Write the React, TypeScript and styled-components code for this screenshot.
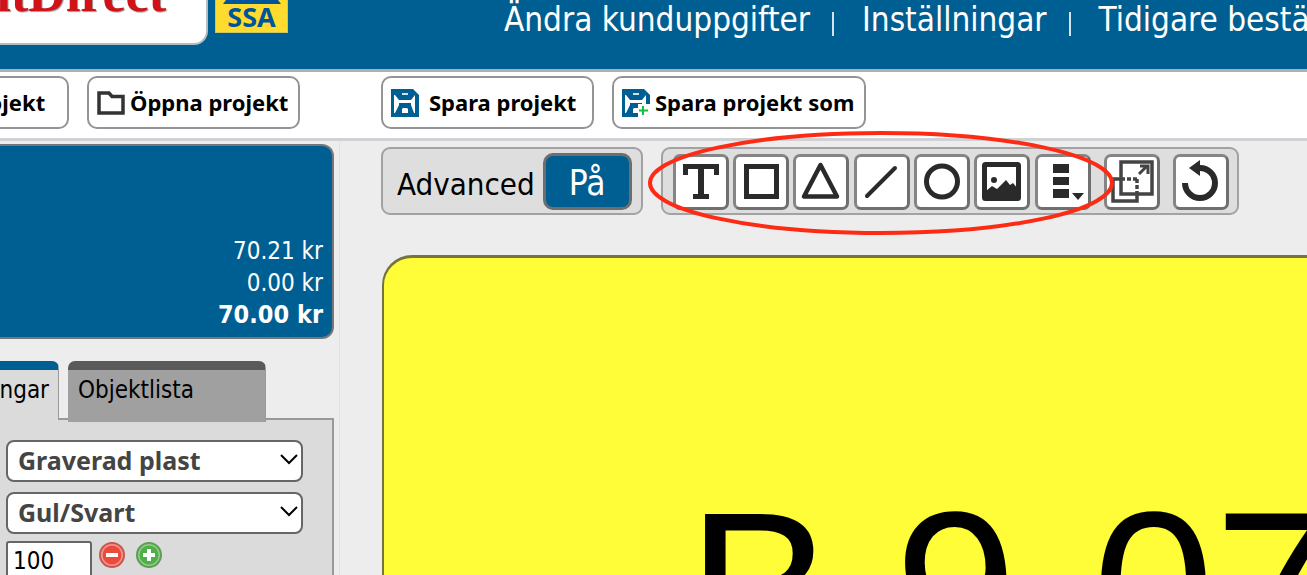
import React from "react";
import styled, { createGlobalStyle } from "styled-components";

const blue = "#005f92";
const ink = "#2a2a2a";
const regular = `"DejaVu Sans Condensed", "Noto Sans", sans-serif`;
const heavy = `"Noto Sans", sans-serif`;

const GlobalStyle = createGlobalStyle`
  *, *::before, *::after { box-sizing: border-box; }
  html, body { margin: 0; height: 100%; overflow: hidden; background: #ededed; }
  body { font-family: ${regular}; color: #000; }
  #root { height: 100%; }
  button, input, select { font: inherit; color: inherit; margin: 0; }
  button { cursor: pointer; }
`;

const Page = styled.div`
  display: flex;
  flex-direction: column;
  height: 100%;
  overflow: hidden;
`;

const Header = styled.header`
  display: flex;
  align-items: flex-start;
  flex: none;
  height: 72px;
  background: ${blue};
  border-bottom: 3px solid #adafb1;
  overflow: hidden;
`;

const LogoCard = styled.div`
  display: flex;
  justify-content: flex-end;
  align-items: flex-end;
  flex: none;
  width: 208px;
  height: 45px;
  padding: 0 40px 31px 0;
  background: #fff;
  border: solid #b5bcc2;
  border-width: 0 2px 2px 0;
  border-bottom-right-radius: 14px;
  overflow: hidden;
`;

const LogoText = styled.span`
  font: bold 52px/36px "Liberation Serif", serif;
  color: #cf1318;
  text-shadow: 1px 1px 1px #999;
`;

const Badge = styled.div`
  display: flex;
  flex-direction: column;
  align-items: center;
  flex: none;
  width: 73px;
  height: 33px;
  margin-left: 7px;
  background: #fddb2f;
  border: solid #c9c66a;
  border-width: 0 1px 1px;
  color: #00549a;
  font: bold 27px/26px ${heavy};
`;

const BadgeRoof = styled.svg`
  display: block;
  flex: none;
  width: 58px;
  height: 4px;
`;

const Nav = styled.nav`
  display: flex;
  flex: 1;
  min-width: 0;
  padding-left: 216px;
  color: #fff;
  font-size: 33px;
  line-height: 40px;
  white-space: nowrap;
  overflow: hidden;
`;

const NavLink = styled.a`
  color: inherit;
  text-decoration: none;
`;

const Divider = styled.span`
  flex: none;
  width: 2px;
  height: 24px;
  margin: 12px 28px 0 22px;
  background: #d5e3ec;
`;

const ActionBar = styled.div`
  display: grid;
  grid-template-columns: 340px 1fr;
  flex: none;
  padding: 4px 0 9px;
  background: #fff;
  border-bottom: 3px solid #cfd1d5;
`;

const Actions = styled.div<{ $end?: boolean }>`
  display: flex;
  gap: 18px;
  justify-content: ${(p) => (p.$end ? "flex-end" : "flex-start")};
  padding: ${(p) => (p.$end ? "0 40px 0 0" : "0 0 0 41px")};
  overflow: hidden;
`;

const ActionButton = styled.button<{ $width: number; $gap?: number }>`
  display: flex;
  align-items: center;
  gap: ${(p) => p.$gap ?? 5}px;
  flex: none;
  width: ${(p) => p.$width}px;
  height: 53px;
  padding: 0 8px;
  background: #fff;
  border: 2px solid #949494;
  border-radius: 10px;
  font: bold 22px/28px ${heavy};
  white-space: nowrap;
`;

const ActionLabel = styled.span`
  padding-bottom: 2px;
`;

const Main = styled.main`
  display: grid;
  grid-template-columns: 340px 1fr;
  grid-template-rows: 1fr;
  flex: 1;
  min-height: 0;
`;

const Sidebar = styled.aside`
  min-height: 0;
  padding: 3px 5px 0 0;
  border-right: 1px solid #e2e2e2;
  overflow: hidden;
`;

const Prices = styled.dl`
  display: flex;
  flex-direction: column;
  justify-content: flex-end;
  height: 195px;
  margin: 0;
  padding: 0 9px 6px 0;
  background: ${blue};
  border: solid #777;
  border-width: 2px 2px 2px 0;
  border-radius: 0 12px 12px 0;
  color: #fff;
  font-size: 24px;
  line-height: 32px;
`;

const Price = styled.dd<{ $total?: boolean }>`
  margin: 0;
  text-align: right;
  font-size: ${(p) => (p.$total ? 25 : 24)}px;
  font-weight: ${(p) => (p.$total ? "bold" : "normal")};
`;

const Tabs = styled.div`
  display: flex;
  align-items: flex-start;
  gap: 9px;
  margin-top: 22px;
`;

const Tab = styled.button<{ $active?: boolean; $width: number }>`
  position: relative;
  display: flex;
  justify-content: ${(p) => (p.$active ? "flex-end" : "flex-start")};
  align-items: flex-start;
  width: ${(p) => p.$width}px;
  height: ${(p) => (p.$active ? 59 : 61)}px;
  padding: 4px 9px 0 10px;
  background: ${(p) => (p.$active ? "#dbdbdb" : "#a0a0a0")};
  border: 0 solid #999;
  border-top: 9px solid ${(p) => (p.$active ? blue : "#5a5a5a")};
  border-right-width: 1px;
  border-radius: ${(p) => (p.$active ? "0 7px 0 0" : "7px 7px 0 0")};
  font-size: 24px;
  line-height: 32px;
  overflow: hidden;
`;

const Settings = styled.section`
  display: flex;
  flex-direction: column;
  margin-top: -4px;
  padding: 20px 29px 20px 6px;
  background: #dbdbdb;
  border: solid #999;
  border-width: 2px 2px 0 0;
`;

const SelectBox = styled.div`
  display: grid;
  align-items: center;
  margin-bottom: 10px;
`;

const Select = styled.select`
  grid-area: 1 / 1;
  width: 100%;
  height: 42px;
  padding: 0 40px 2px 10px;
  appearance: none;
  background: #fff;
  border: 2px solid #666;
  border-radius: 8px;
  color: #444;
  font: bold 25px/34px ${heavy};
`;

const Chevron = styled.svg`
  grid-area: 1 / 1;
  justify-self: end;
  width: 18px;
  height: 12px;
  margin: 0 5px 4px 0;
  pointer-events: none;
`;

const SizeRow = styled.div`
  display: flex;
  align-items: flex-start;
  gap: 11px;
  margin-top: -3px;
`;

const SizeInput = styled.input`
  width: 86px;
  height: 40px;
  margin-right: -4px;
  padding: 0 5px;
  background: #fff;
  border: 2px solid #666;
  border-radius: 3px;
  font-size: 24px;
`;

const RoundButton = styled.button`
  display: block;
  width: 26px;
  height: 28px;
  padding: 1px 0;
  background: none;
  border: 0;
`;

const Workspace = styled.div`
  display: flex;
  flex-direction: column;
  min-width: 0;
  min-height: 0;
  padding: 6px 0 0 41px;
`;

const Tools = styled.div`
  display: flex;
  gap: 18px;
`;

const Panel = styled.div<{ $pad: string; $gap: number }>`
  position: relative;
  display: flex;
  align-items: center;
  gap: ${(p) => p.$gap}px;
  flex: none;
  height: 68px;
  padding: ${(p) => p.$pad};
  background: #dedede;
  border: 2px solid #a2a2a2;
  border-radius: 9px;
`;

const PanelLabel = styled.label`
  font-size: 31px;
  line-height: 40px;
  padding-top: 6px;
`;

const Toggle = styled.button`
  width: 89px;
  height: 57px;
  padding: 4px 0 0;
  background: ${blue};
  border: 3px solid #6e6e6e;
  border-radius: 10px;
  color: #fff;
  font-size: 35px;
  line-height: 40px;
`;

const ToolSet = styled.div`
  display: flex;
  justify-content: space-between;
  width: 418px;
`;

const ToolButton = styled.button`
  width: 56px;
  height: 56px;
  padding: 0;
  background: #fff;
  border: 3px solid #858585;
  border-right-color: #6f6f6f;
  border-bottom-color: #6f6f6f;
  border-radius: 7px;
`;

const ToolIcon = styled.svg`
  display: block;
  width: 50px;
  height: 50px;
`;

const Highlight = styled.svg`
  position: absolute;
  left: -16px;
  top: -19px;
  width: 468px;
  height: 106px;
  pointer-events: none;
`;

const Sheet = styled.div`
  display: flex;
  gap: 75px;
  flex: 1;
  min-height: 0;
  margin: 40px 0 0 1px;
  padding: 208px 0 0 303px;
  background: #fffd38;
  border: solid #75733f;
  border-width: 3px 0 0 2px;
  border-top-left-radius: 30px;
  font: 220px/248px "Liberation Sans", sans-serif;
  white-space: nowrap;
  overflow: hidden;
`;

const Floppy = ({ plus }: { plus?: boolean }) => (
  <svg width="28" height="28" viewBox="0 0 28 28" aria-hidden="true">
    <path d="M0 0H22L28 6V28H0Z" fill={blue} />
    <path d="M4 6L8 11V16L4 24H3V6ZM24 6V24H23L20 16V11Z" fill="#fff" />
    <path d="M7 11H21V14H7Z" fill="#fff" />
    <path d="M11 4H17V6H11Z" fill="#cfe0ea" />
    <path d="M11 24V20L12 19H16L17 20V24Z" fill="#fff" />
    {plus && (
      <>
        <path d="M16 15H28V28H16Z" fill="#fff" />
        <path d="M21 17V26M17 21.5H26" stroke="#10c040" strokeWidth="2" />
      </>
    )}
  </svg>
);

const Folder = () => (
  <svg width="28" height="24" viewBox="0 0 28 24" aria-hidden="true">
    <path d="M2 2H12L15 5.5H26V22H2Z" fill="none" stroke="#333" strokeWidth="3.5" />
  </svg>
);

const shapes: { name: string; art: React.ReactNode }[] = [
  {
    name: "Text",
    art: <path d="M7 7H43V18H38V12H28V37H33V42H17V37H22V12H12V18H7Z" fill={ink} />,
  },
  {
    name: "Rektangel",
    art: <rect x="10.5" y="9.5" width="30" height="30" fill="none" stroke={ink} strokeWidth="5" />,
  },
  {
    name: "Triangel",
    art: <path d="M24.5 8L8 39.5H41Z" fill="none" stroke={ink} strokeWidth="4.5" strokeLinejoin="round" />,
  },
  {
    name: "Linje",
    art: <path d="M10 39L38 11" stroke={ink} strokeWidth="4" strokeLinecap="round" />,
  },
  {
    name: "Cirkel",
    art: <circle cx="25" cy="24.5" r="15.5" fill="none" stroke={ink} strokeWidth="5" />,
  },
  {
    name: "Bild",
    art: (
      <>
        <rect x="7.5" y="7.5" width="34" height="34" rx="1" fill="none" stroke={ink} strokeWidth="5" />
        <circle cx="17" cy="23" r="3" fill={ink} />
        <path d="M9 40V34L15 29L20 32L29 23L33 28L36 26L41 32V40Z" fill={ink} />
      </>
    ),
  },
  {
    name: "Lista",
    art: (
      <>
        <path d="M15 7H31V16H15ZM15 20H31V28H15ZM15 32H31V41H15Z" fill={ink} />
        <path d="M34 36H46L40 43Z" fill={ink} />
      </>
    ),
  },
];

const RoundIcon = ({ edge, fill, light, d }: { edge: string; fill: string; light: string; d: string }) => (
  <svg width="26" height="26" viewBox="0 0 26 26" aria-hidden="true">
    <circle cx="13" cy="13" r="12" fill={light} stroke={edge} strokeWidth="2" />
    <circle cx="13" cy="13" r="9.5" fill={fill} />
    <path d={d} stroke="#fff" strokeWidth="4" />
  </svg>
);

export default function App() {
  return (
    <>
      <GlobalStyle />
      <Page>
        <Header>
          <LogoCard>
            <LogoText>SkyltDirect</LogoText>
          </LogoCard>
          <Badge>
            <BadgeRoof viewBox="0 0 58 4" aria-hidden="true">
              <path d="M3 0H55L58 4H0Z" fill="#00549a" />
            </BadgeRoof>
            SSA
          </Badge>
          <Nav>
            <NavLink href="#kund">Ändra kunduppgifter</NavLink>
            <Divider />
            <NavLink href="#installningar">Inställningar</NavLink>
            <Divider />
            <NavLink href="#bestallningar">Tidigare beställningar</NavLink>
          </Nav>
        </Header>

        <ActionBar>
          <Actions $end>
            <ActionButton $width={213} $gap={16}>
              <Folder />
              <ActionLabel>Nytt projekt</ActionLabel>
            </ActionButton>
            <ActionButton $width={213}>
              <Folder />
              <ActionLabel>Öppna projekt</ActionLabel>
            </ActionButton>
          </Actions>
          <Actions>
            <ActionButton $width={213} $gap={10}>
              <Floppy />
              <ActionLabel>Spara projekt</ActionLabel>
            </ActionButton>
            <ActionButton $width={254}>
              <Floppy plus />
              <ActionLabel>Spara projekt som</ActionLabel>
            </ActionButton>
          </Actions>
        </ActionBar>

        <Main>
          <Sidebar>
            <Prices>
              <Price>70.21 kr</Price>
              <Price>0.00 kr</Price>
              <Price $total>70.00 kr</Price>
            </Prices>
            <Tabs>
              <Tab $active $width={59}>
                Inställningar
              </Tab>
              <Tab $width={198}>Objektlista</Tab>
            </Tabs>
            <Settings>
              {["Graverad plast", "Gul/Svart"].map((value, i) => (
                <SelectBox key={value}>
                  <Select aria-label={i ? "Färg" : "Material"}>
                    <option>{value}</option>
                  </Select>
                  <Chevron viewBox="0 0 18 12" aria-hidden="true">
                    <path d="M1 2L9 10L17 2" fill="none" stroke="#000" strokeWidth="2" />
                  </Chevron>
                </SelectBox>
              ))}
              <SizeRow>
                <SizeInput aria-label="Bredd" defaultValue="100" />
                <RoundButton aria-label="Minska">
                  <RoundIcon edge="#c8564e" light="#f09a90" fill="#ee4a3c" d="M7 13H19" />
                </RoundButton>
                <RoundButton aria-label="Öka">
                  <RoundIcon edge="#5c9e56" light="#94c98c" fill="#4fb045" d="M7 13H19M13 7V19" />
                </RoundButton>
              </SizeRow>
            </Settings>
          </Sidebar>

          <Workspace>
            <Tools>
              <Panel $pad="0 9px 0 14px" $gap={8}>
                <PanelLabel htmlFor="advanced">Advanced</PanelLabel>
                <Toggle id="advanced">På</Toggle>
              </Panel>
              <Panel $pad="2px 8px 0 10px" $gap={13}>
                <ToolSet>
                  {shapes.map((s) => (
                    <ToolButton key={s.name} aria-label={s.name}>
                      <ToolIcon viewBox="0 0 50 50">{s.art}</ToolIcon>
                    </ToolButton>
                  ))}
                </ToolSet>
                <ToolButton aria-label="Ändra storlek">
                  <ToolIcon viewBox="0 0 50 50" fill="none" stroke="#444" strokeWidth="3.5">
                    <path d="M14 5H45V37H14ZM14 22H6V44H30V37" />
                    <path d="M14 22H32M30 22V36" strokeDasharray="4 2" />
                    <path d="M32 17L40 9M33 9H41V17" strokeWidth="3" />
                  </ToolIcon>
                </ToolButton>
                <ToolButton aria-label="Ångra">
                  <ToolIcon viewBox="0 0 50 50">
                    <path d="M9 26A15 15 0 1 0 24 11" fill="none" stroke={ink} strokeWidth="6" />
                    <path d="M24 3V19L13 11Z" fill={ink} />
                  </ToolIcon>
                </ToolButton>
                <Highlight viewBox="0 0 468 106" aria-hidden="true">
                  <ellipse cx="234" cy="53" rx="231" ry="50" fill="none" stroke="#fd2a14" strokeWidth="4" />
                </Highlight>
              </Panel>
            </Tools>
            <Sheet>
              <span>B 9</span>
              <span>07</span>
            </Sheet>
          </Workspace>
        </Main>
      </Page>
    </>
  );
}
